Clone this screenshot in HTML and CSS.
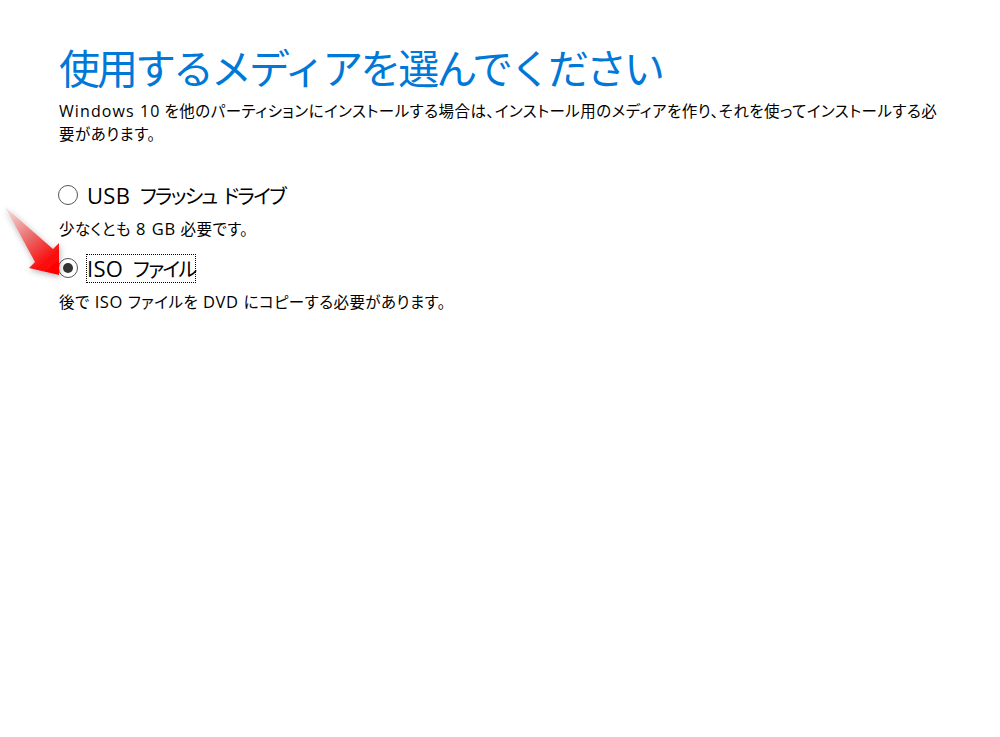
FILE: index.html
```html
<!DOCTYPE html>
<html lang="ja">
<head>
    <meta charset="UTF-8">
    <title>使用するメディアを選んでください</title>
    <link rel="stylesheet" href="styles.css">
</head>
<body>
    <div class="container">
        <h1>使用するメディアを選んでください</h1>
        <p class="intro"><span class="latin">Windows 10</span> を他のパーティションにインストールする場合は、インストール用のメディアを作り、それを使ってインストールする必<br>要があります。</p>

        <div class="options">
            <label class="option">
                <input type="radio" name="media">
                <span class="option-label"><span class="latin">USB</span> フラッシュ ドライブ</span>
            </label>
            <p class="help-text">少なくとも <span class="latin">8 GB</span> 必要です。</p>

            <label class="option">
                <input type="radio" name="media" checked>
                <span class="option-label focused"><span class="latin">ISO</span> ファイル</span>
            </label>
            <p class="help-text">後で <span class="latin">ISO</span> ファイルを <span class="latin">DVD</span> にコピーする必要があります。</p>
        </div>
    </div>

    <!-- red annotation arrow pointing at the ISO radio -->
    <svg class="arrow" width="70" height="80" viewBox="0 0 70 80">
        <defs>
            <linearGradient id="arrowFill" x1="6" y1="208" x2="59" y2="274" gradientUnits="userSpaceOnUse">
                <stop offset="0" stop-color="#f6e2e2"/>
                <stop offset="0.45" stop-color="#ea6a6a"/>
                <stop offset="0.8" stop-color="#fb0a0a"/>
                <stop offset="1" stop-color="#ff0000"/>
            </linearGradient>
            <filter id="arrowShadow" x="-20%" y="-20%" width="150%" height="150%">
                <feDropShadow dx="1" dy="2" stdDeviation="3" flood-color="#000" flood-opacity="0.3"/>
            </filter>
        </defs>
        <g transform="translate(0,-205)">
            <polygon points="5,207 53,249 59,243 59,275 29,268 35,262" fill="url(#arrowFill)" filter="url(#arrowShadow)"/>
        </g>
    </svg>
</body>
</html>
```

FILE: styles.css
```css
* {
    margin: 0;
    padding: 0;
    box-sizing: border-box;
}

body {
    font-family: "Noto Sans CJK JP", "Noto Sans", sans-serif;
    background: #fff;
    color: #000;
    min-height: 100vh;
}

.container {
    padding: 38px 44px 0 59px;
}

h1 {
    font-size: 41px;
    font-weight: 400;
    line-height: 56px;
    letter-spacing: -3px;
    color: #0078d7;
    white-space: nowrap;
}

.intro {
    font-size: 15.5px;
    line-height: 23px;
    margin-top: 5px;
    letter-spacing: 0.48px;
    white-space: nowrap;
    font-feature-settings: "palt";
}

.intro .latin {
    font-size: 16px;
    line-height: 1;
}

.latin {
    font-family: "Open Sans", sans-serif;
    letter-spacing: 1.1px;
}

.options {
    margin-top: 35px;
}

.option {
    display: flex;
    align-items: center;
    gap: 8px;
    height: 30px;
}

.option input {
    appearance: none;
    width: 20px;
    height: 20px;
    margin-left: -1px;
    border: 1.5px solid #555;
    border-radius: 50%;
    background: #fff;
    display: grid;
    place-items: center;
}

.option input:checked::before {
    content: "";
    width: 10px;
    height: 10px;
    border-radius: 50%;
    background: #333;
}

.option-label {
    font-size: 20px;
    line-height: 27px;
    letter-spacing: -1.7px;
    word-spacing: 4px;
    border: 1px solid transparent;
    font-feature-settings: "palt";
    white-space: nowrap;
}

.option-label .latin {
    font-size: 22px;
    line-height: 1;
    letter-spacing: 0.3px;
    margin-right: 3px;
}

.option-label.focused {
    border: 1px dotted #000;
}

.help-text {
    font-size: 15.5px;
    line-height: 22px;
    margin-top: 7px;
    margin-bottom: 14px;
    letter-spacing: 0.45px;
    word-spacing: 1px;
    font-feature-settings: "palt";
}

.help-text .latin {
    font-size: 16.5px;
    line-height: 1;
    letter-spacing: 0.6px;
}

.arrow {
    position: absolute;
    left: 0;
    top: 205px;
}
```
